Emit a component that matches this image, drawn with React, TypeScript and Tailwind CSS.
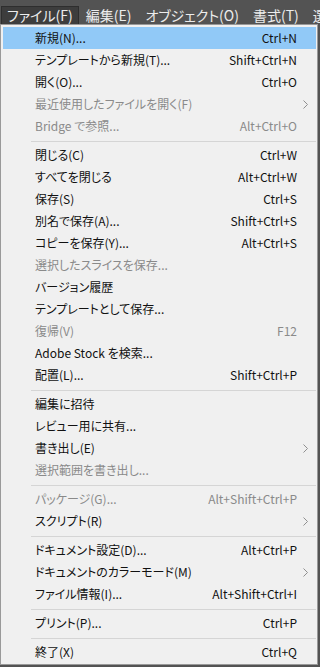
import React from "react";

type Item =
  | { sep: true }
  | {
      sep?: false;
      label: string;
      shortcut?: string;
      disabled?: boolean;
      sub?: boolean;
      active?: boolean;
    };

const items: Item[] = [
  { label: "新規(N)...", shortcut: "Ctrl+N", active: true },
  { label: "テンプレートから新規(T)...", shortcut: "Shift+Ctrl+N" },
  { label: "開く(O)...", shortcut: "Ctrl+O" },
  { label: "最近使用したファイルを開く(F)", disabled: true, sub: true },
  { label: "Bridge で参照...", shortcut: "Alt+Ctrl+O", disabled: true },
  { sep: true },
  { label: "閉じる(C)", shortcut: "Ctrl+W" },
  { label: "すべてを閉じる", shortcut: "Alt+Ctrl+W" },
  { label: "保存(S)", shortcut: "Ctrl+S" },
  { label: "別名で保存(A)...", shortcut: "Shift+Ctrl+S" },
  { label: "コピーを保存(Y)...", shortcut: "Alt+Ctrl+S" },
  { label: "選択したスライスを保存...", disabled: true },
  { label: "バージョン履歴" },
  { label: "テンプレートとして保存..." },
  { label: "復帰(V)", shortcut: "F12", disabled: true },
  { label: "Adobe Stock を検索..." },
  { label: "配置(L)...", shortcut: "Shift+Ctrl+P" },
  { sep: true },
  { label: "編集に招待" },
  { label: "レビュー用に共有..." },
  { label: "書き出し(E)", sub: true },
  { label: "選択範囲を書き出し...", disabled: true },
  { sep: true },
  { label: "パッケージ(G)...", shortcut: "Alt+Shift+Ctrl+P", disabled: true },
  { label: "スクリプト(R)", sub: true },
  { sep: true },
  { label: "ドキュメント設定(D)...", shortcut: "Alt+Ctrl+P" },
  { label: "ドキュメントのカラーモード(M)", sub: true },
  { label: "ファイル情報(I)...", shortcut: "Alt+Shift+Ctrl+I" },
  { sep: true },
  { label: "プリント(P)...", shortcut: "Ctrl+P" },
  { sep: true },
  { label: "終了(X)", shortcut: "Ctrl+Q" },
];

const menuBar = ["ファイル(F)", "編集(E)", "オブジェクト(O)", "書式(T)", "選択(S)"];

const Chevron = () => (
  <svg width="5" height="9" viewBox="0 0 5 9" fill="none">
    <path d="M0.5 0.5 L4.5 4.5 L0.5 8.5" stroke="#8f8f8f" strokeWidth="1" />
  </svg>
);

export default function App() {
  return (
    <div
      className="w-[320px] h-[667px] overflow-hidden bg-[#535353] [font-feature-settings:'palt']"
      style={{ fontFamily: "'Noto Sans CJK JP', 'Noto Sans', sans-serif" }}
    >
      {/* menu bar */}
      <div className="h-[24px] flex items-end whitespace-nowrap text-[14px] text-[#ececec]">
        {menuBar.map((m, i) => (
          <div
            key={m}
            className={
              i === 0
                ? "h-[18px] ml-[1px] px-[5px] flex items-center bg-[#3d3d3d] border border-[#2e2e2e] border-b-0"
                : "h-[18px] px-[7px] flex items-center"
            }
          >
            {m}
          </div>
        ))}
      </div>

      {/* dropdown */}
      <div className="w-[318px] bg-[#f0f0f0] border border-[#999999] pt-[2px] pb-[1px] pl-[2px] pr-[1px] text-[12px]">
        {items.map((it, i) =>
          it.sep ? (
            <div key={i} className="mt-[4px] mb-[2px] ml-[28px] h-px bg-[#d5d5d5]" />
          ) : (
            <div
              key={i}
              className={
                "h-[22px] flex items-center pl-[32px] " +
                (it.active ? "bg-[#91c9f7] " : "") +
                (it.disabled ? "text-[#8a8a8a]" : "text-[#111111]")
              }
            >
              <div className="flex-1 whitespace-nowrap">{it.label}</div>
              {it.shortcut && <div className="whitespace-nowrap">{it.shortcut}</div>}
              <div className="w-[19px] pl-[6px] flex items-center">{it.sub && <Chevron />}</div>
            </div>
          )
        )}
      </div>
    </div>
  );
}
